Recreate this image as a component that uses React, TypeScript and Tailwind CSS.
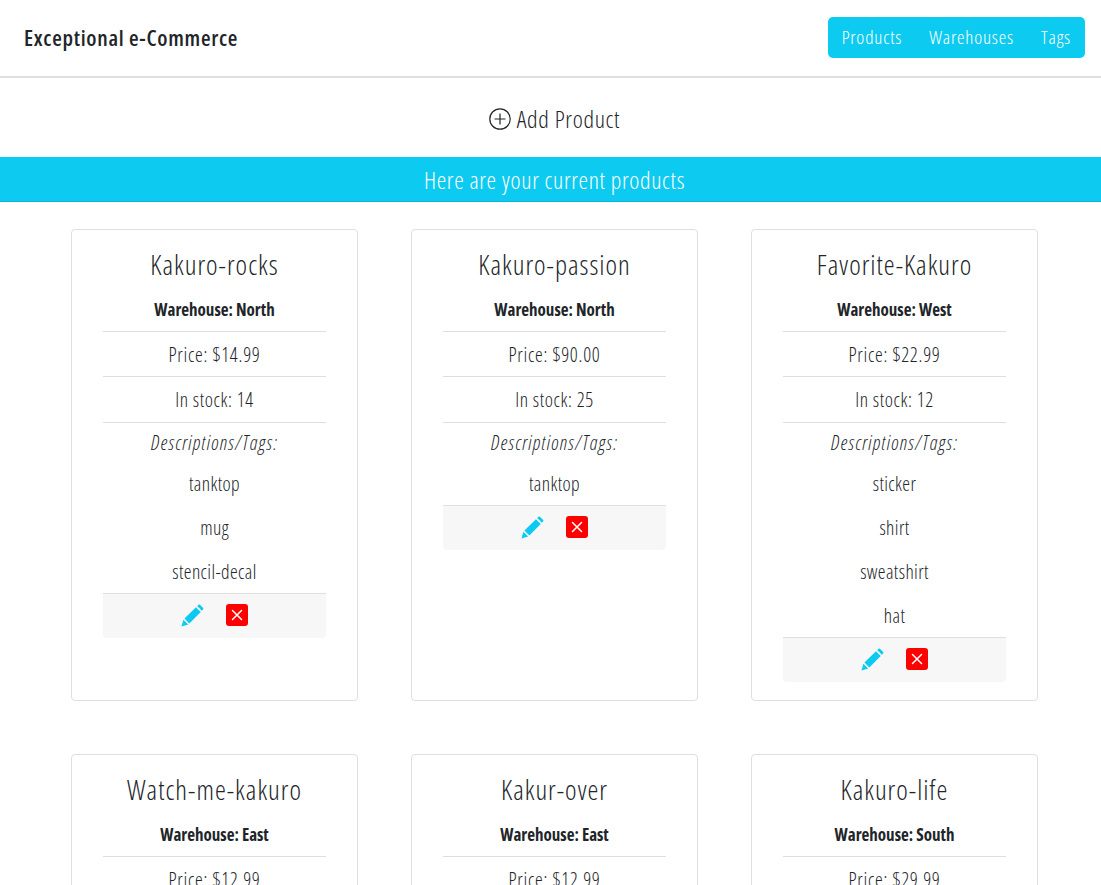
const font = '[font-family:"Open_Sans",sans-serif] [font-stretch:75%]';

type Product = {
  name: string;
  warehouse: string;
  price: string;
  stock: number;
  tags: string[];
};

const products: Product[] = [
  { name: 'Kakuro-rocks', warehouse: 'North', price: '14.99', stock: 14, tags: ['tanktop', 'mug', 'stencil-decal'] },
  { name: 'Kakuro-passion', warehouse: 'North', price: '90.00', stock: 25, tags: ['tanktop'] },
  { name: 'Favorite-Kakuro', warehouse: 'West', price: '22.99', stock: 12, tags: ['sticker', 'shirt', 'sweatshirt', 'hat'] },
  { name: 'Watch-me-kakuro', warehouse: 'East', price: '12.99', stock: 8, tags: ['mug'] },
  { name: 'Kakur-over', warehouse: 'East', price: '12.99', stock: 10, tags: ['shirt'] },
  { name: 'Kakuro-life', warehouse: 'South', price: '29.99', stock: 6, tags: ['hat'] },
];

function PencilIcon() {
  return (
    <svg width="23" height="23" viewBox="0 0 24 24" className="fill-[#0dcaf0]">
      <path d="M0.5 23.5 L2.5 16.5 L7.5 21.5 Z" />
      <path d="M3.6 15.2 L15.6 3.4 L20.6 8.4 L8.7 20.3 Z" />
      <path d="M16.9 2.1 L18.3 0.8 Q19 0.2 19.8 0.8 L23.1 4.1 Q23.7 4.9 23.1 5.6 L21.8 7 Z" />
    </svg>
  );
}

function DeleteIcon() {
  return (
    <span className="flex h-[22px] w-[22px] items-center justify-center rounded-[3px] bg-[#ff0000]">
      <svg width="12" height="12" viewBox="0 0 12 12" className="stroke-white" strokeWidth="1.5" strokeLinecap="round">
        <path d="M1.5 1.5 L10.5 10.5 M10.5 1.5 L1.5 10.5" />
      </svg>
    </span>
  );
}

function ProductCard({ product }: { product: Product }) {
  return (
    <div className="rounded-[4px] border border-[#dfdfdf] bg-white px-[31px] pt-[14px] pb-[18px] font-light text-[#212529]">
      <h3 className="h-[44px] text-center text-[27.5px] leading-[42px] tracking-[1px]">{product.name}</h3>
      <div className="flex h-[44px] items-center justify-center border-b border-[#dfdfdf] text-[17px] font-bold">
        Warehouse: {product.warehouse}
      </div>
      <div className="flex h-[45px] items-center justify-center border-b border-[#dfdfdf] pt-[2px] text-[19.5px] tracking-[0.75px]">
        Price: ${product.price}
      </div>
      <div className="flex h-[46px] items-center justify-center border-b border-[#dfdfdf] text-[19.5px] tracking-[0.6px]">
        In stock: {product.stock}
      </div>
      <div className="flex h-[39px] items-center justify-center text-[19.5px] tracking-[1.2px] italic">Descriptions/Tags:</div>
      <div className="mt-[-1px]">
        {product.tags.map((tag) => (
          <div key={tag} className="flex h-[44px] items-center justify-center pt-[2px] text-[19.5px] tracking-[0.4px]">
            {tag}
          </div>
        ))}
      </div>
      <div className="flex h-[45px] items-center justify-center gap-[22px] rounded-b-[4px] border-t border-[#dfdfdf] bg-[#f7f7f7] pb-[2px]">
        <PencilIcon />
        <DeleteIcon />
      </div>
    </div>
  );
}

export default function App() {
  return (
    <div className={`h-[885px] overflow-hidden bg-white ${font}`}>
      <nav className="flex h-[78px] items-center justify-between border-b-2 border-[#dfdfdf] pr-[16px] pb-[1px] pl-[24px]">
        <span className="text-[22px] font-semibold tracking-[0.7px] text-[#212529]">Exceptional e-Commerce</span>
        <div className="flex h-[41px] items-center gap-[27px] rounded-[5px] bg-[#0dcaf0] px-[14px] text-[19px] font-light tracking-[0.8px] text-white">
          <span>Products</span>
          <span>Warehouses</span>
          <span>Tags</span>
        </div>
      </nav>
      <main className="w-[1109px]">
        <div className="flex h-[79px] items-center justify-center gap-[6px] pt-[2px] text-[24px] font-light tracking-[0.7px] text-[#212529]">
          <svg width="22" height="22" viewBox="0 0 22 22" className="fill-none stroke-[#212529]" strokeWidth="1.2">
            <circle cx="11" cy="11" r="10.2" />
            <path d="M11 5.5 V16.5 M5.5 11 H16.5" />
          </svg>
          Add Product
        </div>
        <div className="flex h-[45px] items-center justify-center border-b border-[#0bb3d5] bg-[#0dcaf0] pt-[1px] text-[24px] font-light tracking-[0.65px] text-white">
          Here are your current products
        </div>
        <div className="grid grid-cols-[287px_287px_287px] gap-x-[53px] gap-y-[53px] pt-[27px] pl-[71px]">
          {products.map((product) => (
            <ProductCard key={product.name} product={product} />
          ))}
        </div>
      </main>
    </div>
  );
}
